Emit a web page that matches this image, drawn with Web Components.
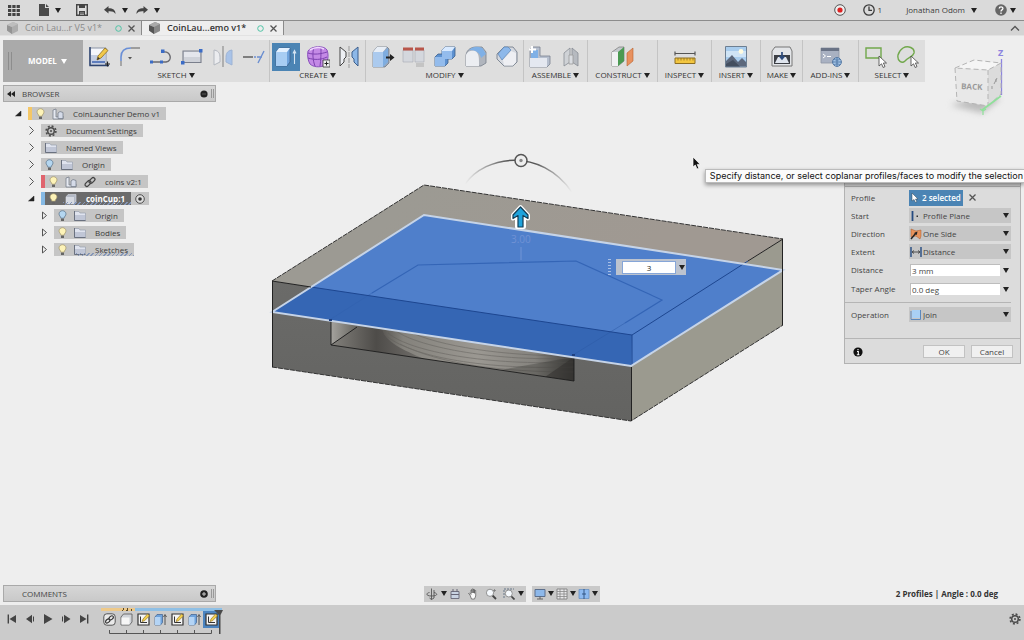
<!DOCTYPE html>
<html lang="en">
<head>
<meta charset="utf-8">
<title>CoinLauncher Demo v1</title>
<style>
  html, body { margin: 0; height: 100%; }
  body { font: 8px/12px "Open Sans", "Noto Sans", sans-serif; color: #3a3a3a; background: #eeeeee; overflow: hidden; }
</style>
</head>
<body>
<cad-app></cad-app>
<script>
const ICONS = {
  caret: [6, 5, '<path d="M0 0H6L3 5Z" fill="#222"/>'],
  caretw: [6, 5, '<path d="M0 0H6L3 5Z" fill="#fff"/>'],
  grid: [12, 12, '<g fill="#444"><path d="M0 1h3.3v3H0zM4.3 1h3.3v3H4.3zM8.6 1h3.3v3H8.6zM0 5h3.3v3H0zM4.3 5h3.3v3H4.3zM8.6 5h3.3v3H8.6zM0 9h3.3v3H0zM4.3 9h3.3v3H4.3zM8.6 9h3.3v3H8.6z"/></g>'],
  file: [10, 12, '<path d="M0 0H6V4H10V12H0Z M7 0L10 3H7Z" fill="#4a4a4a"/>'],
  save: [12, 12, '<path d="M.7 .7H11.3V11.3H.7Z" fill="#ddd" stroke="#444" stroke-width="1.4"/><path d="M3 0H9V4H3ZM3 7h6v5H3z" fill="#444"/><path d="M4 9h4M4 10.5h4" stroke="#ddd" stroke-width=".6"/>'],
  undo: [12, 9, '<path d="M4.5 0V2.3C9 2.3 11.5 4 11.5 8C10 5.5 8 5 4.5 5.2V7.5L0 3.8Z" fill="#444"/>'],
  redo: [12, 9, '<path d="M7.5 0V2.3C3 2.3 .5 4 .5 8C2 5.5 4 5 7.5 5.2V7.5L12 3.8Z" fill="#444"/>'],
  record: [12, 12, '<circle cx="6" cy="6" r="5.3" fill="#eee" stroke="#555"/><circle cx="6" cy="6" r="2.6" fill="#d22"/>'],
  clock: [12, 12, '<circle cx="6" cy="6" r="5.2" fill="none" stroke="#3a3a3a" stroke-width="1.3"/><path d="M6 2.5V6.4H9" fill="none" stroke="#3a3a3a" stroke-width="1.3"/>'],
  help: [12, 12, '<circle cx="6" cy="6" r="5.8" fill="#666"/><path d="M4.2 4.6C4.2 2.3 7.9 2.3 7.9 4.5C7.9 6 6 5.8 6 7.4M6 8.6V10" fill="none" stroke="#fff" stroke-width="1.3"/>'],
  up: [10, 6, '<path d="M1 5.5L5 1.5L9 5.5" fill="none" stroke="#555" stroke-width="1.3"/>'],
  cube: [13, 13, '<path d="M1 3L7 0L12 2V9L6 12L1 8.5Z" fill="#888"/><path d="M1 3L6 5V12L1 8.5Z" fill="#555"/><path d="M1 3L7 0L12 2L6 5Z" fill="#aaa"/>'],
  ring: [7, 7, '<circle cx="3.5" cy="3.5" r="2.8" fill="none" stroke="#4fc3a5"/>'],
  x: [7, 7, '<path d="M.5 .5L6.5 6.5M6.5 .5L.5 6.5" stroke="#555" stroke-width="1.3"/>'],
  rewind: [8, 6, '<path d="M4 0V6L0 3ZM8 0V6L4 3Z" fill="#222"/>'],
  plus: [8, 8, '<circle cx="4" cy="4" r="3.8" fill="#222"/><path d="M2 4H6M4 2V6" stroke="#ccc"/>'],
  dot: [8, 8, '<circle cx="4" cy="4" r="3.6" fill="#222"/><path d="M2 4H6" stroke="#555"/>'],
  open: [7, 7, '<path d="M6 1V6H0.5Z" fill="#222" stroke="#222" stroke-width=".5"/>'],
  closed: [7, 9, '<path d="M1.5 .5L5.5 4.5L1.5 8.5" fill="none" stroke="#555" stroke-width="1"/>'],
  tri: [7, 9, '<path d="M1.5 1L5.5 4.5L1.5 8Z" fill="none" stroke="#555" stroke-width="1"/>'],
  bulb: [9, 12, '<path d="M4.5 .7C2.3 .7 1 2.3 1 4C1 5.6 2.7 6.4 2.9 8.2H6.1C6.3 6.4 8 5.6 8 4C8 2.3 6.7 .7 4.5 .7Z" fill="#fdf3b8" stroke="#a3966a" stroke-width=".7"/><path d="M3 8.600H6V11H3Z" fill="#666"/>'],
  bulboff: [9, 12, '<path d="M4.5 .7C2.3 .7 1 2.3 1 4C1 5.6 2.7 6.4 2.9 8.2H6.1C6.3 6.4 8 5.6 8 4C8 2.3 6.7 .7 4.5 .7Z" fill="#b4d6f0" stroke="#56718a" stroke-width=".7"/><path d="M3 8.600H6V11H3Z" fill="#666"/>'],
  gear: [12, 12, '<circle cx="6" cy="6" r="3.3" fill="none" stroke="#4b4b4b" stroke-width="1.5"/><circle cx="6" cy="6" r="4.9" fill="none" stroke="#4b4b4b" stroke-width="1.6" stroke-dasharray="1.95 1.9"/><circle cx="6" cy="6" r="1" fill="#4b4b4b"/>'],
  folder: [12, 11, '<path d="M.5 10.5V1.5H5L6 3H11.5V10.5Z" fill="#dfe3ee" stroke="#9aa1af" stroke-width=".7"/><path d="M1 5H11V10H1Z" fill="#c0c6d6"/><path d="M.5 1V10.5H11.5" fill="none" stroke="#6a717f"/>'],
  comp: [12, 12, '<path d="M1 2L4 1V9L11 8V11H1Z" fill="#e6e9f0" stroke="#777f8c" stroke-width=".8"/><path d="M6 5L8 3.5L11 4.5V10.5H6Z" fill="#d5dbe8" stroke="#777f8c" stroke-width=".8"/>'],
  box: [12, 12, '<path d="M1 4L3 1.5H11V8.5L9 11H1Z" fill="#b4bac6" stroke="#d8dce4" stroke-width=".6"/><path d="M1 4H9V11H1Z" fill="#d6dae2"/>'],
  link: [12, 12, '<g fill="none" stroke="#444" stroke-width="1.3"><rect x=".6" y="5.7" width="6.8" height="3.6" rx="1.8" transform="rotate(-45 4 7.5)"/><rect x="4.6" y="2.7" width="6.8" height="3.6" rx="1.8" transform="rotate(-45 8 4.5)"/></g>'],
  target: [10, 10, '<circle cx="5" cy="5" r="4.3" fill="#ddd" stroke="#444" stroke-width=".9"/><circle cx="5" cy="5" r="1.8" fill="#333"/>'],

  sketch: [24, 24, '<path d="M3 3H19V20H3Z" fill="#f4f6fb" stroke="#8b94a6"/><path d="M4 10H18V19H4Z" fill="#c3cde2"/><path d="M3 2V20.5H22" stroke="#2d4370" stroke-width="1.5" fill="none"/><path d="M5 17L18 17" stroke="#3c62b0" stroke-width="1.5"/><path d="M10 15L11 11L18 3L21 5.5L14 13Z" fill="#f2c94a" stroke="#8a6b1e" stroke-width=".8"/><path d="M10 15L11 12L13 13.5Z" fill="#333"/><path d="M18 19H23M20.5 16.500V21.500" stroke="#222" stroke-width="1.2"/>'],
  fillet: [24, 24, '<path d="M3 21V16M13 3H22" stroke="#888" stroke-width="1.3"/><path d="M3 16V12C3 6 6 3 13 3" fill="none" stroke="#6a8fd6" stroke-width="1.6"/><path d="M10 12H14L12 14.5Z" fill="#555"/>'],
  line: [24, 24, '<path d="M2 17H13M13 17H17C24 16 22 6 14 7" fill="none" stroke="#6a6a70" stroke-width="1.4"/><g fill="#3b6cc6"><path d="M1 15.5h3v3H1zM11 15.5h3v3h-3zM12 4.5h3.5v3.5H12z"/></g>'],
  rect: [24, 24, '<path d="M3 6H21V17.5H3Z" fill="#cfd2d9" stroke="#7a7f8c" stroke-width="1.1"/><path d="M4 7H20V12H4Z" fill="#e4e6ec"/><g fill="#3b6cc6"><path d="M1 16h3.5v3.5H1zM19 4h3.5v3.5H19z"/></g>'],
  mirrors: [24, 24, '<path d="M3 5C9 6 9 10 9 14V17L3 20Z" fill="#ebecef" stroke="#b4b8c0"/><path d="M21 5C15 6 15 10 15 14V17L21 20Z" fill="#a9c3e8" stroke="#9db3d4"/><path d="M12 1V22" stroke="#888" stroke-width="1.1"/>'],
  trim: [24, 24, '<path d="M1 12H11" stroke="#555" stroke-width="1.4"/><path d="M12 12H14" stroke="#6c8fd0" stroke-width="1.4"/><path d="M15 12H20M16 18L22 6" stroke="#6c8fd0" stroke-width="1.4" fill="none"/>'],
  extrude: [24, 24, '<path d="M2 7L5 3H16V17L13 21H2Z" fill="#6fa3dc" stroke="#3d5f8c" stroke-width=".8" stroke-linejoin="round"/><path d="M2 7H13V21H2Z" fill="#a8cdf3"/><path d="M2 7L5 3H16L13 7Z" fill="#e4f1ff"/><path d="M20.500 19V7M19 8.500L20.500 5.500L22 8.500" stroke="#d5e4f2" fill="none" stroke-width="1.1"/>'],
  form: [24, 24, '<path d="M2 6C5 1 18 0 21 5C23 10 22 17 19 20C14 23 7 22 4 19C2 16 1 10 2 6Z" fill="#c48ae6" stroke="#8a50bd"/><path d="M2 8C8 10 15 9 21 7M2 13C8 15 15 15 21 12M8 2C6 8 7 16 9 21M15 2C15 8 15 15 14 21" fill="none" stroke="#7d42b0"/><path d="M4 5C9 2 14 2 18 4" stroke="#f0d8ff" stroke-width="1.5" fill="none"/><path d="M17 15h7v7h-7z" fill="#eee" stroke="#333" stroke-width=".8"/><path d="M18.5 18.5h4M20.5 16.5v4" stroke="#222"/>'],
  mirror: [24, 24, '<path d="M3 2L9 7V12L7 14V17L3 21Z" fill="#eef0f4" stroke="#444" stroke-linejoin="round"/><path d="M21 2L15 7V12L17 14V17L21 21Z" fill="#8db8e8" stroke="#3d5f8c" stroke-linejoin="round"/><path d="M12 1V23" stroke="#999" stroke-dasharray="5 1"/>'],
  press: [24, 24, '<path d="M2 7L6 2H16L18 4V18L14 22H2Z" fill="#9aa6b8" stroke="#667080" stroke-width=".7" stroke-linejoin="round"/><path d="M2 7L6 2H16L12 7Z" fill="#e8eef6"/><path d="M12 7L17 3V17L12 22Z" fill="#7fade0"/><path d="M2 7H12V22H2Z" fill="#abcaee"/><path d="M15 11.500H19V9L23.500 12.500L19 16V13.500H15Z" fill="#222"/>'],
  change: [24, 24, '<path d="M1 5H11V17H1ZM13 5H22V17H13Z" fill="#d4d7dd" stroke="#a4a9b2" stroke-width=".6"/><path d="M1 2.5H11V5.5H1ZM13 2.5H22V5.500H13Z" fill="#b8564a"/><path d="M14 19H22M14 21H22" stroke="#aaa"/>'],
  combine: [24, 24, '<path d="M2 12L5 9H9V5L12 2H22V11L19 14H15V18L12 21H2Z" fill="#5d91d0" stroke="#3d5f8c" stroke-width=".8" stroke-linejoin="round"/><path d="M2 12H9V6H19V14H12V21H2Z" fill="#94bcec"/><path d="M9 5L12 2H22L19 6H9Z" fill="#d9eaff"/>'],
  filletbox: [24, 24, '<path d="M2 10C3 4 8 2 12 2H18L22 7V18L17 21H2Z" fill="#b0b5bd" stroke="#777f8c" stroke-width=".8"/><path d="M5 5C10 0 18 2 19 4L22 9L17 13C16 8 12 5 5 5Z" fill="#7fb0e6"/><path d="M2 10C3 6 8 5 11 6C15 8 15 12 15 21H2Z" fill="#eceef2"/>'],
  chamfer: [24, 24, '<path d="M2 9L9 2H18L22 7V17L18 21H9L2 14Z" fill="#d5d9e0" stroke="#777f8c" stroke-width=".9" stroke-linejoin="round"/><path d="M9 2H13L16 5L7 15L3 9Z" fill="#8db8ea" stroke="#4d78ac" stroke-width=".6"/><path d="M8 15L16 6L21 8V17L18 20.500H9Z" fill="#eeeff3"/>'],
  joincomp: [24, 24, '<path d="M2 12V4L4 2H12V11H22V19L19 22H2Z" fill="#b6bfce" stroke="#78818f" stroke-width=".8"/><path d="M3 5H10V13H3Z" fill="#7fb0e6"/><path d="M2 13H19V22H2Z" fill="#e4e8f0"/><path d="M4 1V8M1 4.5H8" stroke="#fff" stroke-width="2"/>'],
  joint: [24, 24, '<path d="M5 8L11 3V17L5 21Z" fill="#cfd2d6" stroke="#888d94" stroke-width=".8"/><path d="M19 8L13 3V17L19 21Z" fill="#b6bac0" stroke="#888d94" stroke-width=".8"/><path d="M10 10H14V19H10Z" fill="#d9dce1" stroke="#999" stroke-width=".8"/>'],
  planes: [24, 24, '<path d="M1 7L8 2H13V16L7 21H1Z" fill="#c5c9ce" stroke="#777" stroke-width=".7"/><path d="M7 7L13 2V16L7 21Z" fill="#4a9a52"/><path d="M1 7H7V21H1Z" fill="#f0f1f3"/><path d="M16 8L22 3V16L16 21Z" fill="#e8915f" stroke="#b9612e" stroke-width=".6"/>'],
  measure: [24, 24, '<path d="M2 8.5H22M2 6.5V10.5M22 6.5V10.5" stroke="#555" stroke-width="1.2"/><path d="M2 13H22V18.5H2Z" fill="#f3c640" stroke="#8d6e22"/><path d="M5 13v2.5M8 13v2.5M11 13v2.5M14 13v2.5M17 13v2.5M20 13v2.5" stroke="#8d6e22" stroke-width=".8"/>'],
  picture: [24, 24, '<path d="M1.5 1.5H22.5V22H1.5Z" fill="#a9cdee" stroke="#6d7f92"/><path d="M2 6H22V12H2Z" fill="#cfe4f6"/><circle cx="17" cy="6.5" r="2.4" fill="#fffbe0"/><path d="M2 16L8 10L14 17L18 13L22 17V21.5H2Z" fill="#5c687c"/><path d="M2 19L9 15L16 21.5H2Z" fill="#434e5e"/>'],
  make: [24, 24, '<path d="M2 6L5 2H20L22 6V21H2Z" fill="#e3e5e8" stroke="#777"/><path d="M4 10H20V19H4Z" fill="#3c3f45"/><path d="M5 18L8 12H16L19 18Z" fill="#dfe5ee"/><path d="M12 7V13M9.5 11L12 14L14.5 11" stroke="#2c4a7c" stroke-width="1.7" fill="none"/>'],
  addins: [24, 24, '<path d="M2 3H20V18H2Z" fill="#a9b1c2" stroke="#8d95a4" stroke-width=".8"/><path d="M2 3H20V6H2Z" fill="#6a7386"/><path d="M4 9L6.5 11L4 13M8 11.5H12" stroke="#fff" fill="none"/><circle cx="18" cy="17" r="4.4" fill="#a4c4e6" stroke="#3e6697" stroke-width=".8"/><path d="M13.5 17H22.5M18 12.5V21.5M15 14C17 15.500 19 15.500 21 14M15 20C17 18.500 19 18.500 21 20" fill="none" stroke="#3e6697" stroke-width=".7"/>'],
  selrect: [24, 24, '<path d="M1 3H16V13H1Z" fill="none" stroke="#71a84c" stroke-width="1.4"/><path d="M14 11V21L16.5 18.8L18.2 22.5L20 21.6L18.4 18H21.5Z" fill="#fff" stroke="#444" stroke-width=".8"/>'],
  sellasso: [24, 24, '<path d="M7 3C12 0 19 3 18 8C17 12 12 12 9 16C6 19 1 16 2 10C3 6 4 5 7 3Z" fill="none" stroke="#71a84c" stroke-width="1.4"/><path d="M15 11V21L17.5 18.8L19.2 22.5L21 21.6L19.4 18H22.5Z" fill="#fff" stroke="#444" stroke-width=".8"/>'],

  pick: [8, 10, '<path d="M1 0V8L3 6.5L4.5 9.5L5.8 8.8L4.5 6H7Z" fill="#fff" stroke="#345" stroke-width=".5"/>'],
  plane: [12, 12, '<path d="M2.5 1V11" stroke="#244a80" stroke-width="1.8"/><path d="M6.5 5.5h1.5v1.5H6.5z" fill="#333"/>'],
  oneside: [12, 12, '<path d="M1 1L6 3L11 2V8L10 11L6 8L1 9Z" fill="#e8935c" stroke="#a9582a" stroke-width=".5"/><path d="M1 11L6 5" stroke="#222" stroke-width="1.4"/><path d="M4 5L7.500 3.500L6.800 7Z" fill="#222"/>'],
  dist: [12, 12, '<path d="M1 1V11M11 1V11" stroke="#244a80" stroke-width="1.4"/><path d="M2 6H10M4 4.5L2 6L4 7.5M8 4.5L10 6L8 7.5" fill="none" stroke="#444" stroke-width=".9"/>'],
  join: [12, 12, '<path d="M2 1H10V9H2Z" fill="#a9d0f5"/><path d="M1 2V10.5H10.500V1" fill="none" stroke="#5c88bc"/>'],
  info: [10, 10, '<circle cx="5" cy="5" r="4.6" fill="#111"/><path d="M5 2V3.3M4 4.5H5.3V7.5M3.8 7.7H6.5" stroke="#fff" stroke-width="1.1" fill="none"/>'],

  orbit: [12, 12, '<g fill="none" stroke="#555" stroke-width=".9"><path d="M5.500 .5V11.500M8 4.500C12 5.500 12 8 5.500 8C-.5 8 0 5 3.500 4.500M8 2V10"/><path d="M3.500 10L5.500 11.500L8 10"/></g>'],
  look: [12, 12, '<path d="M2 3.500H10V10.500H2Z" fill="#c9d3e2" stroke="#667" stroke-width=".9"/><path d="M4 1V4M8 1V4M2 6.500H10" stroke="#667"/>'],
  hand: [12, 12, '<path d="M3 7L1.500 5.500L2.5 5L4 6.5V2H5V5V1H6.300V5V1.5H7.5V5.300V2.500H8.700V8L7.500 11H4.500Z" fill="#fafafa" stroke="#555" stroke-width=".7"/>'],
  zoom: [12, 12, '<path d="M7 7L11 11" stroke="#444" stroke-width="1.8"/><circle cx="5" cy="4.8" r="3.6" fill="#f5f9fd" stroke="#888" stroke-width=".9"/><path d="M9.500 1V4M8 2.500H11" stroke="#777" stroke-width=".7"/>'],
  fit: [12, 12, '<path d="M1 10V1H11" fill="none" stroke="#678" stroke-dasharray="2 1"/><path d="M8 8L11.5 11.5" stroke="#444" stroke-width="1.7"/><circle cx="5.8" cy="5.5" r="3.5" fill="#f5f9fd" stroke="#888" stroke-width=".9"/>'],
  monitor: [12, 12, '<path d="M1 1.5H11V8.5H1Z" fill="#8db8ea" stroke="#5c6f8c"/><path d="M6 8.5V10.5M3 11H9" stroke="#666" stroke-width="1.1"/>'],
  gridv: [12, 12, '<path d="M1 1H11V11H1Z" fill="#e8e8ea" stroke="#777" stroke-width=".8"/><path d="M1 3.5H11M1 6H11M1 8.5H11M4 1V11M8 1V11" stroke="#888" stroke-width=".8"/>'],
  split: [12, 12, '<path d="M1 1.5H11V10.5H1Z" fill="#8dbaf0" stroke="#6a92c4" stroke-width=".8"/><path d="M6 1V11M4 6H8" stroke="#2e4f7c" stroke-width=".9"/>'],

  first: [10, 10, '<path d="M1.3 .5V9.5" stroke="#444" stroke-width="1.4"/><path d="M9 1V9L2.5 5Z" fill="#444"/>'],
  prev: [10, 10, '<path d="M7 .7V9.3L1 5Z" fill="#444"/><path d="M8.5 2.5V7.5" stroke="#444"/>'],
  play: [10, 10, '<path d="M1 0L9.5 5L1 10Z" fill="#444"/>'],
  next: [10, 10, '<path d="M3 .7V9.3L9.5 5Z" fill="#444"/><path d="M1.5 2.5V7.5" stroke="#444"/>'],
  last: [10, 10, '<path d="M8.7 .5V9.5" stroke="#444" stroke-width="1.4"/><path d="M1 1V9L7.5 5Z" fill="#444"/>'],
  tlink: [13, 13, '<rect x=".8" y=".8" width="11.4" height="11.4" rx="3" fill="#e9e9e9" stroke="#555"/><g fill="none" stroke="#333" stroke-width="1.1"><ellipse cx="4.800" cy="7.8" rx="2.5" ry="1.6" transform="rotate(-40 5 8)"/><ellipse cx="8.200" cy="5" rx="2.5" ry="1.6" transform="rotate(-40 8 5)"/></g>'],
  tbox: [13, 13, '<path d="M1 4L3.5 1H12V9L9.5 12H1Z" fill="#d0d3d8" stroke="#555" stroke-width=".8" stroke-linejoin="round"/><path d="M1.5 4.5H9.5V11.5H1.5Z" fill="#f6f6f6"/>'],
  tsketch: [13, 13, '<path d="M1 1H12V12H1Z" fill="#f5f5f5" stroke="#333" stroke-width="1.2"/><path d="M3.5 3.5V9.5H10" stroke="#333" fill="none"/><path d="M5 8.5L6 6L10.5 1L12.5 2.8L7.5 7.8Z" fill="#f3cf4e" stroke="#8a6b1e" stroke-width=".6"/>'],
  textrude: [13, 13, '<path d="M1 4L3 1.5H8.5V9.5L6.5 12H1Z" fill="#6fa3dc" stroke="#3d5f8c" stroke-width=".7"/><path d="M1 4H6.5V12H1Z" fill="#b4d4f5"/><path d="M11 12V3M9.5 4L11 1.5L12.5 4" fill="none" stroke="#555"/>'],
};

function element(tag, html, setup) {
  const tpl = document.createElement('template');
  tpl.innerHTML = '<style>*{box-sizing:border-box}button{font:inherit;color:inherit;background:none;border:0;padding:0;margin:0}</style>' + html;
  customElements.define(tag, class extends HTMLElement {
    connectedCallback() {
      if (this.shadowRoot) return;
      const root = this.attachShadow({ mode: 'open' });
      root.append(tpl.content.cloneNode(true));
      if (setup) setup(this, root);
    }
  });
}

element('ui-icon', '<style>:host{display:inline-flex;flex:none}svg{display:block}</style>', (el, root) => {
  const [w, h, body] = ICONS[el.getAttribute('name')];
  root.innerHTML += `<svg width="${w}" height="${h}" viewBox="0 0 ${w} ${h}" aria-hidden="true">${body}</svg>`;
});

element('title-bar', `<style>
  :host{display:flex;align-items:center;height:21px;background:#dadada;border-bottom:1px solid #8c8c8c;padding:0 8px;flex:none}
  button{display:flex;align-items:center;gap:6px}
  .file{margin-left:19px}.save{margin-left:15px}.undo{margin-left:16px}.redo{margin-left:8px}
  .user{margin-left:auto;display:flex;align-items:center}
  .clock{margin-left:17px;gap:3px}.name{margin-left:24px}.help{margin-left:18px}
  .name{gap:6px}.help{gap:3px}
</style>
<button aria-label="Data panel"><ui-icon name="grid"></ui-icon></button>
<button class="file" aria-label="File"><ui-icon name="file"></ui-icon><ui-icon name="caret"></ui-icon></button>
<button class="save" aria-label="Save"><ui-icon name="save"></ui-icon></button>
<button class="undo" aria-label="Undo"><ui-icon name="undo"></ui-icon><ui-icon name="caret"></ui-icon></button>
<button class="redo" aria-label="Redo"><ui-icon name="redo"></ui-icon><ui-icon name="caret"></ui-icon></button>
<div class="user">
<button aria-label="Record"><ui-icon name="record"></ui-icon></button>
<button class="clock"><ui-icon name="clock"></ui-icon>1</button>
<button class="name">Jonathan Odom<ui-icon name="caret"></ui-icon></button>
<button class="help" aria-label="Help"><ui-icon name="help"></ui-icon><ui-icon name="caret"></ui-icon></button>
</div>`);

element('doc-tab', `<style>
  :host{display:flex;align-items:center;width:142px;padding:0 6px;border-right:1px solid #8a8a8a;color:#8a8a8a;font-size:9px}
  :host([active]){background:#eeeeee;color:#333;font-weight:600}
  :host(:not([active])) .cube{opacity:.5}
  .t{margin:0 auto 0 6px;white-space:nowrap}
  button{display:flex;margin-left:6px}
</style><ui-icon class="cube" name="cube"></ui-icon><span class="t"><slot></slot></span><ui-icon name="ring"></ui-icon><button aria-label="Close tab"><ui-icon name="x"></ui-icon></button>`);

element('tab-strip', `<style>
  :host{display:flex;height:15px;background:#d4d4d4;border-bottom:1px solid #e2e2e2;flex:none}
  button{margin-left:auto;padding-right:4px}
</style><doc-tab>Coin Lau...r V5 v1*</doc-tab><doc-tab active>CoinLau...emo v1*</doc-tab><button aria-label="Collapse"><ui-icon name="up"></ui-icon></button>`);

element('tool-group', `<style>
  :host{display:flex;flex-direction:column;align-items:center;border-right:1px solid #c4c4c4;padding:3px 0 0;min-width:var(--w,0)}
  :host(:last-of-type){border:0}
  .icons{display:flex}
  .icons button{width:31px;height:28px;display:flex;align-items:center;justify-content:center}
  .icons button.on{width:28px;background:#4b84b4;margin:0 2px 0 1px}
  .label{display:flex;align-items:center;gap:2px;line-height:8px;color:#333}
</style><div class="icons"></div><button class="label"><span></span><ui-icon name="caret"></ui-icon></button>`, (el, root) => {
  root.querySelector('span').textContent = el.getAttribute('label');
  root.querySelector('.icons').innerHTML = el.getAttribute('tools').split(' ').map(n =>
    `<button aria-label="${n}"${n === 'extrude' ? ' class="on"' : ''}><ui-icon name="${n}"></ui-icon></button>`).join('');
});

element('tool-ribbon', `<style>
  :host{display:flex;height:42px;background:#dedede}
  .model{display:flex;align-items:center;width:80px;background:#aaaaaa;color:#fff;font-weight:700;padding:0 5px;gap:4px}
  .grip{width:4px;height:18px;border:solid #8d8d8d;border-width:0 1px;margin-right:12px}
</style>
<button class="model"><span class="grip"></span>MODEL<ui-icon name="caretw"></ui-icon></button>
<tool-group style="--w:186px" label="SKETCH" tools="sketch fillet line rect mirrors trim"></tool-group>
<tool-group style="--w:96px" label="CREATE" tools="extrude form mirror"></tool-group>
<tool-group style="--w:158px" label="MODIFY" tools="press change combine filletbox chamfer"></tool-group>
<tool-group style="--w:64px" label="ASSEMBLE" tools="joincomp joint"></tool-group>
<tool-group style="--w:70px" label="CONSTRUCT" tools="planes"></tool-group>
<tool-group style="--w:54px" label="INSPECT" tools="measure"></tool-group>
<tool-group style="--w:49px" label="INSERT" tools="picture"></tool-group>
<tool-group style="--w:42px" label="MAKE" tools="make"></tool-group>
<tool-group style="--w:56px" label="ADD-INS" tools="addins"></tool-group>
<tool-group style="--w:66px" label="SELECT" tools="selrect sellasso"></tool-group>`);

element('panel-header', `<style>
  :host{display:flex;align-items:center;height:17px;width:213px;background:linear-gradient(#d6d6d6,#c9c9c9);border:1px solid #a9a9a9;padding:0 1px 0 3px;color:#444}
  .r{display:flex;width:15px}
  .t{margin-right:auto}
  .i{display:flex}
  i{width:3px;height:9px;border:solid #999;border-width:0 1px;margin-left:3px}
</style><span class="r"></span><span class="t"><slot></slot></span><button class="i" aria-label="Toggle panel"></button><i></i>`, (el, root) => {
  if (el.hasAttribute('rewind')) root.querySelector('.r').innerHTML = '<ui-icon name="rewind"></ui-icon>';
  root.querySelector('.i').innerHTML = `<ui-icon name="${el.getAttribute('icon')}"></ui-icon>`;
});

element('tree-row', `<style>
  :host{display:flex;align-items:center;height:13px;padding-left:calc(13px * var(--level) - 1px)}
  .e{display:flex;width:13px}
  .c{display:flex;align-items:center;height:13px;background:#c5c5c5;border-left:4px solid var(--bar,#c5c5c5);padding:0 6px 0 0;gap:7px;position:relative}
  :host([bar]) .c{padding-left:4px}
  .t{margin-left:2px}
  .wave{position:absolute;left:18px;right:0;bottom:0;height:3px;background:repeating-linear-gradient(135deg,#8496b8 0 1px,transparent 1px 3px)}
  :host([selected]) .c{background:#6b6b6b;color:#fff;font-weight:700}
  .after{display:flex;align-items:center;height:13px;width:18px;justify-content:center;background:#c5c5c5}
</style><span class="e"></span><div class="c"></div>`, (el, root) => {
  const a = n => el.getAttribute(n);
  root.querySelector('.e').innerHTML = `<ui-icon name="${a('state')}"></ui-icon>`;
  root.querySelector('.c').innerHTML = a('icons').split(' ').map(n => `<ui-icon name="${n}"></ui-icon>`).join('')
    + (el.hasAttribute('wave') ? '<span class="wave"></span>' : '') + '<span class="t"><slot></slot></span>';
  el.style.setProperty('--level', a('level'));
  if (a('bar')) el.style.setProperty('--bar', a('bar'));
  if (el.hasAttribute('selected')) root.querySelector('.c').insertAdjacentHTML('afterend', '<span class="after"><ui-icon name="target"></ui-icon></span>');
});

element('browser-panel', `<style>
  :host{display:flex;flex-direction:column;align-items:flex-start}
  .tree{display:flex;flex-direction:column;gap:4px;padding-top:5px}
</style><panel-header rewind icon="dot">BROWSER</panel-header>
<div class="tree">
<tree-row level="1" state="open" bar="#f4c766" icons="bulb comp">CoinLauncher Demo v1</tree-row>
<tree-row level="2" state="closed" icons="gear">Document Settings</tree-row>
<tree-row level="2" state="closed" icons="folder">Named Views</tree-row>
<tree-row level="2" state="closed" icons="bulboff folder">Origin</tree-row>
<tree-row level="2" state="closed" bar="#e0646e" icons="bulb comp link">coins v2:1</tree-row>
<tree-row level="2" state="open" bar="#85b9e4" selected wave icons="bulb box">coinCup:1</tree-row>
<tree-row level="3" state="tri" icons="bulboff folder">Origin</tree-row>
<tree-row level="3" state="tri" icons="bulb folder">Bodies</tree-row>
<tree-row level="3" state="tri" wave icons="bulb folder">Sketches</tree-row>
</div>`);

element('model-scene', `<style>
  :host{display:block}
  svg{display:block;width:100%;height:100%}
  text{font:10px "Open Sans",sans-serif}
</style>
<svg viewBox="0 36 1024 569" preserveAspectRatio="xMidYMid slice">
  <defs>
    <linearGradient id="arc" x1="465" x2="572" y1="0" y2="0" gradientUnits="userSpaceOnUse"><stop offset="0" stop-color="#555" stop-opacity="0"/><stop offset=".4" stop-color="#555"/><stop offset=".65" stop-color="#555"/><stop offset="1" stop-color="#555" stop-opacity="0"/></linearGradient>
    <linearGradient id="front" x1="0" x2="0" y1="281" y2="421" gradientUnits="userSpaceOnUse"><stop offset="0" stop-color="#6b6b69"/><stop offset="1" stop-color="#636361"/></linearGradient>
    <linearGradient id="top" x1="424" x2="560" y1="185" y2="330" gradientUnits="userSpaceOnUse"><stop offset="0" stop-color="#9c9a93"/><stop offset="1" stop-color="#a09992"/></linearGradient>
    <linearGradient id="bowl" x1="380" x2="574" y1="0" y2="0" gradientUnits="userSpaceOnUse"><stop offset="0" stop-color="#55534f"/><stop offset=".12" stop-color="#84827c"/><stop offset=".5" stop-color="#9b9892"/><stop offset=".8" stop-color="#85837e"/><stop offset="1" stop-color="#3d3c3a"/></linearGradient>
    <linearGradient id="wall" x1="331" x2="370" y1="0" y2="0" gradientUnits="userSpaceOnUse"><stop offset="0" stop-color="#a5a39e"/><stop offset="1" stop-color="#45443f"/></linearGradient>
    <linearGradient id="floor" x1="331" x2="460" y1="0" y2="0" gradientUnits="userSpaceOnUse"><stop offset="0" stop-color="#83817c"/><stop offset=".35" stop-color="#4e4c49"/><stop offset="1" stop-color="#8e8b86"/></linearGradient>
    <clipPath id="slot"><path d="M331 321L574 357V381L331 345Z"/></clipPath>
  </defs>
  <path d="M424 185L783 239L632 335L272 281Z" fill="url(#top)"/>
  <path d="M783 239V325L631 421L632 335Z" fill="#9b9a8f"/>
  <path d="M272 281L632 335L631 421L272 367Z" fill="url(#front)"/>
  <g clip-path="url(#slot)">
    <path d="M331 315H574V381L331 345Z" fill="url(#floor)"/>
    <path d="M331 318L400 328L357 327L331 345Z" fill="url(#wall)"/>
    <path d="M382 328C384 342 404 350 424 359L574 381V355Z" fill="url(#bowl)"/>
    <g fill="none" stroke="#5f5d59" stroke-width=".8" opacity=".6"><path d="M396 331C420 348 500 362 574 358"/><path d="M388 333C410 352 490 366 574 362"/><path d="M384 334C410 358 490 370 574 367"/><path d="M410 332C440 346 500 356 574 356"/><path d="M400 344C440 364 500 372 574 372"/></g>
    <path d="M500 370L574 357V381Z" fill="#2f2e2c" opacity=".3"/>
    <path d="M545 377L574 357V381Z" fill="#2f2e2c" opacity=".5"/>
    <path d="M331 345L357 327" stroke="#222"/>
  </g>
  <path d="M331 320V345L574 381V357" fill="none" stroke="#1c1c1c" stroke-width=".9"/>
  <path d="M272 312L424 215L783 270L631 366Z" fill="#4f7fcb"/>
  <path d="M311 287L632 335L631 366L272 312Z" fill="#3566b4"/>
  <path d="M331 319L372 293" stroke="#2f5fae" fill="none" opacity=".5"/>
  <path d="M372 293L418 265L576 261L662 300L625 323" fill="none" stroke="#3465b6" stroke-width="1.2"/>
  <path d="M625 323L573 355" stroke="#2c5aa6" opacity=".5"/>
  <path d="M311 287L632 335L748 261M632 335V366" fill="none" stroke="#1d4690" stroke-width="1"/>
  <path d="M272 312L424 215L783 270L631 366Z" fill="none" stroke="#c6d4e8" stroke-width="2"/>
  <path d="M272 281L311 287M748 261L783 239" fill="none" stroke="#222"/>
  <path d="M272 281L424 185L783 239M272 367L631 421L783 325" fill="none" stroke="#333" stroke-width="1" stroke-dasharray="5 1"/>
  <path d="M272.5 281V367M782.5 239V325M631.5 367V421" fill="none" stroke="#222"/>
  <path d="M329 320h3M572 355h3" stroke="#1d3f80" stroke-width="2"/>
  <text x="511" y="243" fill="#6f92d5">3.00</text>
  <path d="M521 247V260" stroke="#7b9bd9" opacity=".8"/>
  <path d="M465 184C486 155 540 147 572 192" fill="none" stroke="url(#arc)" stroke-width="1.5"/>
  <circle cx="521" cy="160.5" r="6" fill="#eee" stroke="#555" stroke-width="1.5"/><circle cx="521" cy="160.5" r="1.7" fill="#888"/>
  <path d="M520.5 207L528 215V218.5L524 216.5V227H517V216.5L513 218.5V215Z" fill="#1fa3dc" stroke="#fff" stroke-width="4" stroke-linejoin="round"/>
  <path d="M520.5 207L528 215V218.5L523 215.5V227H518V215.5L513 218.5V215Z" fill="#1fa3dc" stroke="#123c55" stroke-width="1.2" stroke-linejoin="round"/>
</svg>`);

element('value-box', `<style>
  :host{display:flex;align-items:center;gap:5px}
  .g{width:3px;height:16px;background:repeating-linear-gradient(#a8bfe6 0 1px,transparent 1px 3px)}
  .b{display:flex;align-items:center;height:16px;background:#bcc3cf;padding-left:6px}
  input{width:54px;height:13px;border:1px solid #86a6d8;background:#fff;padding:0;text-align:center;font:8px "Open Sans",sans-serif;color:#222}
  button{display:flex;width:9px;justify-content:center;margin-left:1px}
</style><span class="g"></span><div class="b"><input aria-label="Distance" value="3"><button aria-label="Distance options"><ui-icon name="caret"></ui-icon></button></div>`);

element('view-cube', `<style>:host{display:block}text{font:700 8px "Open Sans",sans-serif}svg{display:block}.z{font-size:9px}</style>
<svg width="70" height="74" viewBox="945 46 70 74">
  <defs><filter id="s" x="-30%" y="-80%" width="160%" height="260%"><feGaussianBlur stdDeviation="3"/></filter></defs>
  <path d="M950 106L982 114L1000 100L990 95Z" fill="#999" opacity=".6" filter="url(#s)"/>
  <path d="M1001.5 60V96" stroke="#8c84e0" stroke-width="1.3"/>
  <path d="M955 69L974 61L1001 64L988 71Z" fill="#f5f5f5"/>
  <path d="M955 69L988 71V107L957 102Z" fill="#e8e8e8"/>
  <path d="M988 71L1001 64V95L988 107Z" fill="#dcdcdc"/>
  <path d="M955 69L974 61L1001 64L988 71ZM955 69L957 102L988 107L1001 95V64M988 71V107" fill="none" stroke="#b4b4b4" stroke-dasharray="5 3"/>
  <path d="M982 111L1001 97" stroke="#8fe09a" stroke-width="1.6"/><path d="M980 110L983 112V116M986 110L983 112" stroke="#8fe09a" stroke-width="1.2" fill="none"/>
  <path d="M992 87V90M996 80V83M994 85L997 79" stroke="#999"/>
  <text x="961" y="90" fill="#9a9a9a" transform="rotate(3 961 90)">BACK</text>
  <text class="z" x="998" y="57" fill="#8c84e0">Z</text>
</svg>`);

element('form-row', `<style>
  :host{display:flex;align-items:center;height:15px}
  label{flex:none;width:58px;white-space:nowrap}
  .f{flex:1;min-width:0;display:flex;align-items:center;height:15px;background:#c6c6c6;position:relative}
  .f>ui-icon:first-child{margin:0 -13px 0 1px;pointer-events:none;z-index:1}
  select{appearance:none;flex:1;min-width:0;height:15px;border:0;background:none;padding:0 12px 0 14px;font:inherit;color:inherit}
  .caret{margin:0 2px 0 -8px;pointer-events:none}
  :host([kind=input]){height:16px}
  :host([kind=input]) .f{background:none}
  input{flex:1;min-width:0;height:12px;border:1px solid #bdbdbd;border-width:1px 0 0 1px;background:#fff;padding:0 1px;margin:0 11px 0 1px;font:inherit;color:inherit}
  .sel{display:flex;align-items:center;gap:3px;height:16px;background:#4b84b4;color:#fff;font-weight:600;padding:0 2px}
  .x{display:flex;margin-left:6px}
</style><label for="c"></label><div class="f"></div>`, (el, root) => {
  const kind = el.getAttribute('kind'), value = el.getAttribute('value'), f = root.querySelector('.f');
  root.querySelector('label').textContent = el.getAttribute('label');
  if (kind === 'pick') {
    f.style.background = 'none';
    f.innerHTML = `<button class="sel" id="c"><ui-icon name="pick"></ui-icon>${value}</button><button class="x" aria-label="Clear selection"><ui-icon name="x"></ui-icon></button>`;
  } else if (kind === 'input') {
    f.innerHTML = `<input id="c" value="${value}"><ui-icon class="caret" name="caret"></ui-icon>`;
  } else {
    f.innerHTML = `<ui-icon name="${el.getAttribute('icon')}"></ui-icon><select id="c"><option>${value}</option></select><ui-icon class="caret" name="caret"></ui-icon>`;
  }
});

element('command-dialog', `<style>
  :host{display:block;width:177px;background:#dcdcdc;border:1px solid #b2b2b2;color:#444}
  header{height:12px;background:#cfcfcf;border-bottom:1px solid #aaa}
  .rows{display:flex;flex-direction:column;gap:3px;padding:3px 9px 5px 6px}
  .op{border-top:1px solid #b5b5b5;margin-right:9px;padding:4px 0 16px 6px}
  footer{display:flex;align-items:center;gap:6px;border-top:1px solid #b5b5b5;padding:6px 7px 5px 8px}
  footer ui-icon{margin-right:auto}
  footer button{height:13px;width:42px;line-height:11px;background:#f0f0f0;border:1px solid #c2c2c2}
</style><header></header>
<div class="rows">
<form-row kind="pick" label="Profile" value="2 selected"></form-row>
<form-row label="Start" icon="plane" value="Profile Plane"></form-row>
<form-row label="Direction" icon="oneside" value="One Side"></form-row>
<form-row label="Extent" icon="dist" value="Distance"></form-row>
<form-row kind="input" label="Distance" value="3 mm"></form-row>
<form-row kind="input" label="Taper Angle" value="0.0 deg"></form-row>
</div>
<div class="op"><form-row label="Operation" icon="join" value="Join"></form-row></div>
<footer><ui-icon name="info"></ui-icon><button>OK</button><button>Cancel</button></footer>`);

element('nav-tools', `<style>
  :host{display:flex;gap:6px}
  div{display:flex;align-items:center;height:16px;background:#c9c9c9;padding:0 2px}
  button{display:flex;align-items:center}
  .a{gap:6px}.a button{gap:3px}.b button{gap:2px}.b{gap:2px}
  .a button:first-child{margin-right:-4px}
</style><div class="a"><button aria-label="Orbit"><ui-icon name="orbit"></ui-icon><ui-icon name="caret"></ui-icon></button><button aria-label="Look at"><ui-icon name="look"></ui-icon></button><button aria-label="Pan"><ui-icon name="hand"></ui-icon></button><button aria-label="Zoom"><ui-icon name="zoom"></ui-icon></button><button aria-label="Fit"><ui-icon name="fit"></ui-icon><ui-icon name="caret"></ui-icon></button></div>
<div class="b"><button aria-label="Display"><ui-icon name="monitor"></ui-icon><ui-icon name="caret"></ui-icon></button><button aria-label="Grid"><ui-icon name="gridv"></ui-icon><ui-icon name="caret"></ui-icon></button><button aria-label="Viewports"><ui-icon name="split"></ui-icon><ui-icon name="caret"></ui-icon></button></div>`);

element('time-line', `<style>
  :host{display:flex;align-items:flex-start;height:35px;background:#cbcbcb;padding:0 3px 0 7px;flex:none}
  .play{display:flex;gap:8px;padding-top:9px}
  button{display:flex}
  .track{margin-left:12px;width:124px}
  .strip{display:flex;height:3px;margin-top:3px}
  .strip i:first-child{width:34px;background:repeating-linear-gradient(115deg,transparent 0 2px,#5a4a2a 2px 3px,transparent 3px 4px) 20px 0/11px 3px no-repeat,#eec989}
  .strip i:last-child{width:87px;background:#8fc0e6}
  .f{display:flex}
  .f button{width:17px;height:17px;align-items:center;justify-content:center}
  .f .on{background:#4b84c0}
  svg{display:block;margin-top:-20px;position:relative;pointer-events:none}
  .gear{margin:8px 0 0 auto}
</style>
<div class="play"><button aria-label="First"><ui-icon name="first"></ui-icon></button><button aria-label="Previous"><ui-icon name="prev"></ui-icon></button><button aria-label="Play"><ui-icon name="play"></ui-icon></button><button aria-label="Next"><ui-icon name="next"></ui-icon></button><button aria-label="Last"><ui-icon name="last"></ui-icon></button></div>
<div class="track"><div class="strip"><i></i><i></i></div>
<div class="f"><button aria-label="coins"><ui-icon name="tlink"></ui-icon></button><button aria-label="coinCup"><ui-icon name="tbox"></ui-icon></button><button aria-label="Sketch 1"><ui-icon name="tsketch"></ui-icon></button><button aria-label="Extrude 1"><ui-icon name="textrude"></ui-icon></button><button aria-label="Sketch 2"><ui-icon name="tsketch"></ui-icon></button><button aria-label="Extrude 2"><ui-icon name="textrude"></ui-icon></button><button class="on" aria-label="Sketch 3"><ui-icon name="tsketch"></ui-icon></button></div>
<svg width="124" height="26" viewBox="0 0 124 26"><path d="M8.500 22V25.500H110.500V22M25.500 22v3M42.500 22v3M59.500 22v3M76.500 22v3M93.500 22v3" fill="none" stroke="#555"/><path d="M113 2H122L119.500 7V26H118V7Z" fill="#4a4a4a"/></svg>
</div>
<button class="gear" aria-label="Settings"><ui-icon name="gear"></ui-icon></button>`);

element('cad-app', `<style>
  :host{display:flex;flex-direction:column;height:100vh;min-height:400px}
  main{flex:1;min-height:0;position:relative;display:flex;flex-direction:column;align-items:flex-start;padding:4px 3px 3px;overflow:hidden}
  model-scene{position:absolute;inset:0;z-index:-1}
  browser-panel{margin-top:3px}
  .bottom{display:grid;grid-template-columns:1fr auto 1fr;align-items:center;width:100%;margin-top:auto}
  .status{justify-self:end;margin-right:23px;font-weight:700;color:#333}
  value-box{position:absolute;left:calc(50% + 96px);top:223px}
  view-cube{position:absolute;right:9px;top:9px}
  command-dialog{position:absolute;right:3px;top:138px}
  .tip{position:absolute;right:0;top:133px;background:#fbfbfb;border:1px solid #bbb;border-right:0;padding:0 1px 0 4px;font:9px/12px Inter,sans-serif;color:#111;white-space:nowrap;box-shadow:0 2px 4px #0006}
  .cursor{position:absolute;left:calc(50% + 180px);top:120px}
</style>
<title-bar></title-bar><tab-strip></tab-strip>
<main>
  <model-scene></model-scene>
  <tool-ribbon></tool-ribbon>
  <browser-panel></browser-panel>
  <div class="bottom"><panel-header icon="plus">COMMENTS</panel-header><nav-tools></nav-tools><span class="status">2 Profiles | Angle : 0.0 deg</span></div>
  <view-cube></view-cube>
  <value-box></value-box>
  <command-dialog></command-dialog>
  <div class="tip" role="tooltip">Specify distance, or select coplanar profiles/faces to modify the selection</div>
  <svg class="cursor" width="10" height="14" viewBox="0 0 10 14"><path d="M1 1V11L3.3 9L5 13L6.8 12.2L5.2 8.4H8.2Z" fill="#111" stroke="#fff" stroke-width=".7"/></svg>
</main>
<time-line></time-line>`);
</script>
</body>
</html>
